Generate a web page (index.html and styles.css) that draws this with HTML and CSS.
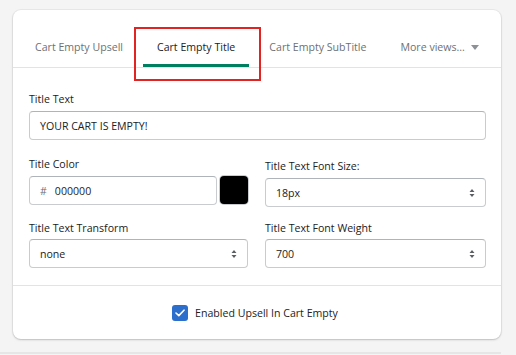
FILE: index.html
```html
<!DOCTYPE html>
<html lang="en">
<head>
    <meta charset="UTF-8">
    <meta name="viewport" content="width=device-width, initial-scale=1.0">
    <title>Cart Empty Title</title>
    <link rel="stylesheet" href="styles.css">
</head>
<body>
    <div class="card">
        <div class="tabs">
            <div class="tab">Cart Empty Upsell</div>
            <div class="tab active">Cart Empty Title</div>
            <div class="tab">Cart Empty SubTitle</div>
            <div class="tab more">More views...
                <svg width="8" height="5" viewBox="0 0 8 5"><path d="M0 0h8L4 5z" fill="#8c9196"/></svg>
            </div>
            <div class="highlight"></div>
        </div>

        <div class="body">
            <div class="field">
                <label>Title Text</label>
                <div class="input">YOUR CART IS EMPTY!</div>
            </div>

            <div class="grid">
                <div class="field">
                    <label>Title Color</label>
                    <div class="color-row">
                        <div class="input"><span class="hash">#</span>000000</div>
                        <div class="swatch"></div>
                    </div>
                </div>
                <div class="field">
                    <label class="low">Title Text Font Size:</label>
                    <div class="input select">18px
                        <svg width="6" height="10" viewBox="0 0 6 10"><path d="M3 1L5.5 4H.5z M3 9L.5 6h5z" fill="#5c5f62"/></svg>
                    </div>
                </div>
                <div class="field">
                    <label class="mid">Title Text Transform</label>
                    <div class="input select">none
                        <svg width="6" height="10" viewBox="0 0 6 10"><path d="M3 1L5.5 4H.5z M3 9L.5 6h5z" fill="#5c5f62"/></svg>
                    </div>
                </div>
                <div class="field">
                    <label class="mid">Title Text Font Weight</label>
                    <div class="input select">700
                        <svg width="6" height="10" viewBox="0 0 6 10"><path d="M3 1L5.5 4H.5z M3 9L.5 6h5z" fill="#5c5f62"/></svg>
                    </div>
                </div>
            </div>
        </div>

        <div class="footer">
            <span class="checkbox">
                <svg width="10" height="8" viewBox="0 0 10 8"><path d="M1 4l2.8 2.6L9 1.2" fill="none" stroke="#fff" stroke-width="1.6" stroke-linecap="round" stroke-linejoin="round"/></svg>
            </span>
            Enabled Upsell In Cart Empty
        </div>
    </div>
    <div class="next"></div>
</body>
</html>
```

FILE: styles.css
```css
body {
    margin: 0;
    padding: 10px 15px 0 13px;
    background-color: #f4f4f4;
    font-family: "Open Sans", "Noto Sans", sans-serif;
    font-size: 10.6px;
    color: #202223;
}
.card {
    background-color: #fff;
    border-radius: 8px;
    box-shadow: 0 0 0 1px rgba(63, 63, 68, 0.06), 0 1px 2px rgba(63, 63, 68, 0.25);
}
.tabs {
    position: relative;
    display: flex;
    align-items: flex-end;
    height: 57px;
    padding: 0 0 0 8px;
    border-bottom: 1px solid #e1e3e5;
    white-space: nowrap;
}
.tab {
    display: flex;
    align-items: center;
    height: 40px;
    padding: 0 14px;
    margin-right: 6px;
    color: #6d7175;
    position: relative;
}
.tab.active {
    color: #202223;
}
.tab.active::after {
    content: "";
    position: absolute;
    left: 0;
    right: 0;
    bottom: 0;
    height: 3px;
    background-color: #008060;
}
.tab.more svg {
    margin-left: 6px;
}
.highlight {
    position: absolute;
    left: 121px;
    top: 17px;
    width: 123px;
    height: 50px;
    border: 2px solid #e02424;
}
.body {
    padding: 24px 15px 17px 16px;
    border-bottom: 1px solid #e1e3e5;
}
.field label {
    display: block;
    margin-bottom: 5px;
    line-height: 14px;
}
.field label.low {
    margin-top: 2px;
}
.field label.mid {
    margin-top: 1px;
    margin-bottom: 4px;
}
.grid {
    display: grid;
    grid-template-columns: 219px 1fr;
    column-gap: 17px;
    row-gap: 13px;
    margin-top: 17px;
}
.input {
    display: flex;
    align-items: center;
    height: 27px;
    padding: 0 10px;
    border: 1px solid #c9cccf;
    border-top-color: #aeb4b9;
    border-radius: 4px;
    color: #202223;
}
.select {
    justify-content: space-between;
}
.hash {
    color: #6d7175;
    margin-right: 8px;
}
.color-row {
    display: flex;
    gap: 3px;
}
.color-row .input {
    flex: 1;
}
.swatch {
    width: 28px;
    height: 28px;
    border-radius: 4px;
    background-color: #000;
    box-shadow: 0 0 0 1px #c9cccf;
}
.footer {
    display: flex;
    align-items: center;
    justify-content: center;
    height: 53px;
    gap: 7px;
    padding-right: 4px;
}
.checkbox {
    display: flex;
    align-items: center;
    justify-content: center;
    width: 16px;
    height: 16px;
    border-radius: 3px;
    background-color: #2c6ecb;
}
.next {
    margin-top: 13px;
    height: 2px;
    margin-left: -13px;
    background-color: #e6e6e6;
}
```
